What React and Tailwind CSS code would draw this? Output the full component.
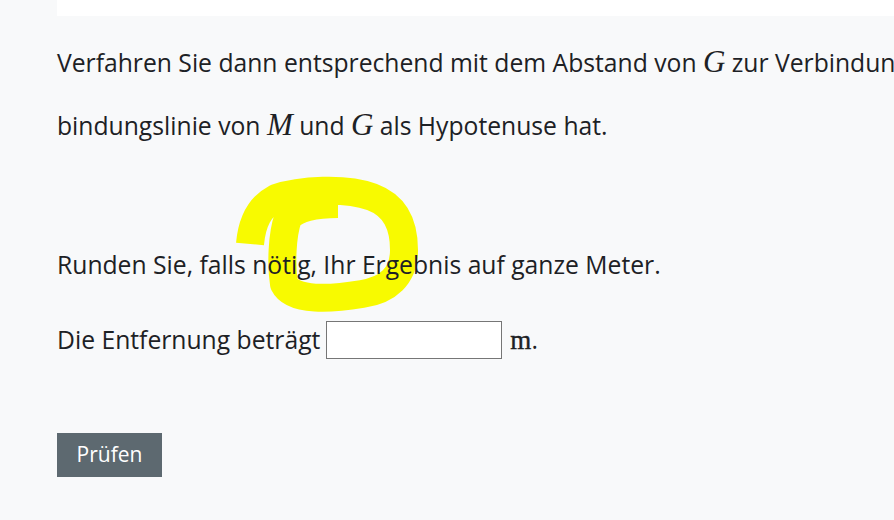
import React from "react";

function MathVar({ children }) {
  return (
    <span className="font-['Liberation_Serif',serif] italic text-[31px] leading-none">
      {children}
    </span>
  );
}

function Highlight() {
  // freehand yellow marker stroke around "nötig, Ihr Ergebnis"
  return (
    <svg
      className="absolute left-0 top-0 pointer-events-none"
      width="894"
      height="520"
      viewBox="0 0 894 520"
    >
      <path
        d="M338 204 C315 204 296 208 288 218 C282 235 281 265 284 284 C293 302 332 299 362 294 C388 290 404 276 404 250 C404 226 396 206 372 197 C345 187 300 190 276 198 C259 207 252 222 250 244"
        fill="none"
        stroke="#f8fa00"
        strokeWidth="28"
        strokeLinecap="butt"
        strokeLinejoin="round"
      />
    </svg>
  );
}

export default function App() {
  return (
    <div className="relative h-[520px] w-[894px] overflow-hidden bg-[#f8f9fa] font-['Open_Sans',sans-serif] text-[24.7px] text-[#1d2125]">
      <Highlight />
      <div className="relative ml-[57px] h-4 bg-white" />

      <div className="relative pl-[57px]">
        <p className="mt-[30px] h-[32px] whitespace-nowrap leading-[32px]">
          Verfahren Sie dann entsprechend mit dem Abstand von <MathVar>G</MathVar> zur Verbindun
        </p>
        <p className="mt-[31px] h-[32px] whitespace-nowrap leading-[32px]">
          bindungslinie von <MathVar>M</MathVar> und <MathVar>G</MathVar> als Hypotenuse hat.
        </p>

        <p className="mt-[108px] h-[32px] leading-[32px]">
          Runden Sie, falls nötig, Ihr Ergebnis auf ganze Meter.
        </p>

        <div className="mt-[40px] flex items-center h-[38px]">
          <span>Die Entfernung beträgt</span>
          <input
            type="text"
            className="ml-[6px] h-[38px] w-[176px] border border-[#767676] bg-white px-2 outline-none"
          />
          <span className="ml-[8px] font-['Liberation_Serif',serif] text-[27px] font-medium [-webkit-text-stroke:0.4px_#1d2125]">m</span>
          <span>.</span>
        </div>

        <button className="mt-[74px] h-[44px] w-[105px] bg-[#5d6970] text-[21px] text-white">
          Prüfen
        </button>
      </div>
    </div>
  );
}
